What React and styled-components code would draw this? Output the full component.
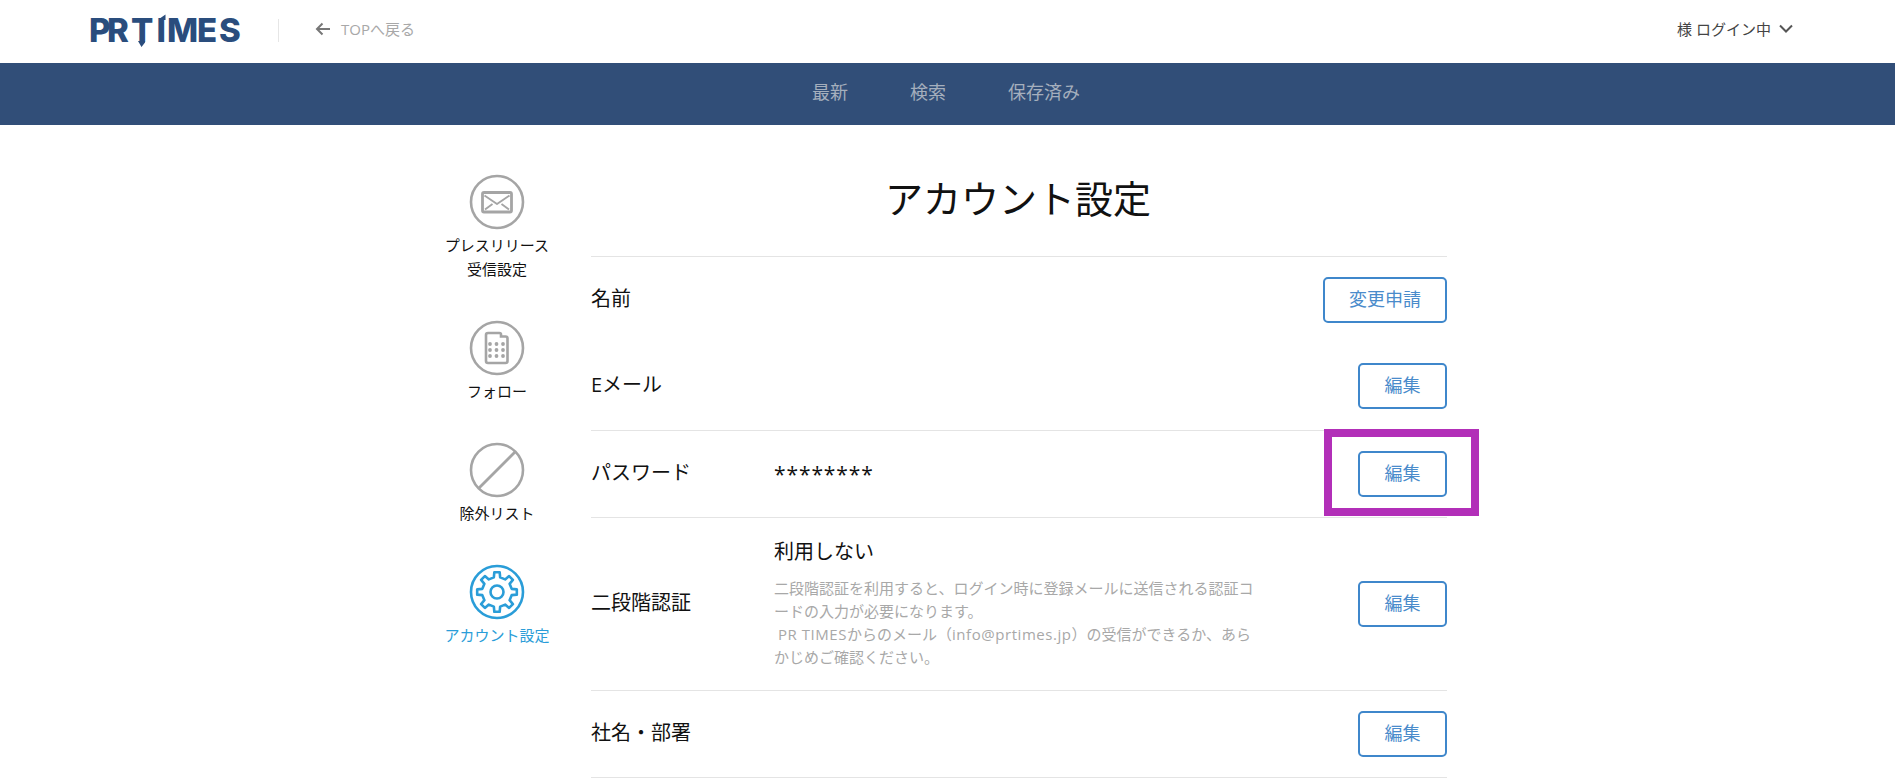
import React from "react";
import styled, { createGlobalStyle } from "styled-components";

const JP = `"Open Sans", "Noto Sans CJK JP", sans-serif`;

function gearPath(cx, cy, teeth, outer, inner) {
  const step = (Math.PI * 2) / teeth;
  const pts = [];
  for (let i = 0; i < teeth; i++) {
    const a = i * step - Math.PI / 2;
    const w = step * 0.17;
    const g = step * 0.27;
    [
      [a - g, inner],
      [a - w, outer],
      [a + w, outer],
      [a + g, inner],
    ].forEach(([t, r]) => pts.push([cx + Math.cos(t) * r, cy + Math.sin(t) * r]));
  }
  return "M" + pts.map((p) => p[0].toFixed(2) + " " + p[1].toFixed(2)).join("L") + "Z";
}

const items = [
  { key: "mail", label: ["プレスリリース", "受信設定"] },
  { key: "follow", label: ["フォロー"] },
  { key: "ban", label: ["除外リスト"] },
  { key: "gear", label: ["アカウント設定"], active: true },
];

function SideIcon({ type }) {
  return (
    <svg width="56" height="56" viewBox="0 0 56 56" fill="none" stroke="currentColor">
      <circle cx="28" cy="28" r="26" strokeWidth="2.6" />
      {type === "mail" && (
        <g strokeLinejoin="round">
          <rect x="13.5" y="18.5" width="29" height="19.5" rx="1.5" strokeWidth="2.8" />
          <path d="M15.5 21.5L28 30l12.5-8.5M16 35.5l7.5-5.5M40 35.5L32.5 30" strokeWidth="1.9" />
        </g>
      )}
      {type === "follow" && (
        <g>
          <path d="M19 13h11.5a1.5 1.5 0 0 1 1.5 1.5V16.5h4.5a2 2 0 0 1 2 2V41a2 2 0 0 1-2 2h-17.5a2 2 0 0 1-2-2V15a2 2 0 0 1 2-2z" strokeWidth="2.6" />
          {[24, 30, 36].map((y) =>
            [21, 27.5, 34].map((x) => (
              <circle key={x + "-" + y} cx={x} cy={y} r="1.9" fill="currentColor" stroke="none" />
            ))
          )}
        </g>
      )}
      {type === "ban" && <path d="M9.500 46.500L46.500 9.500" strokeWidth="2.8" />}
      {type === "gear" && (
        <g strokeWidth="2.6" strokeLinejoin="round">
          <path d={gearPath(28, 28, 8, 20, 15)} />
          <circle cx="28" cy="28" r="6.5" />
        </g>
      )}
    </svg>
  );
}

const rows = [
  { label: "名前", action: "変更申請", noLine: true },
  { label: "Eメール", action: "編集", tall: true },
  { label: "パスワード", action: "編集", secret: true, marked: true },
  { label: "二段階認証", action: "編集", twoStep: true },
  { label: "社名・部署", action: "編集" },
];

export default function App() {
  return (
    <>
      <GlobalStyle />
      <Header>
        <Logo href="#">
          <svg width="156" height="36" viewBox="0 0 156 36">
            <text y="30" x="0 18 42 67.5 78 108 130">
              PRTIMES
            </text>
            <path d="M70 7L76.500 2.500V8H70zM49 29h7v1.500L52.500 35z" />
          </svg>
        </Logo>
        <Divider />
        <BackLink href="#">
          <svg width="16" height="14" viewBox="0 0 16 14" fill="none" stroke="#777" strokeWidth="2">
            <path d="M15 7H2M7.5 1.5L2 7l5.5 5.5" />
          </svg>
          TOPへ戻る
        </BackLink>
        <UserMenu>
          様 ログイン中
          <svg width="14" height="9" viewBox="0 0 14 9" fill="none" stroke="#555" strokeWidth="2">
            <path d="M1 1.500l6 6 6-6" />
          </svg>
        </UserMenu>
      </Header>
      <Nav>
        <NavLink href="#">最新</NavLink>
        <NavLink href="#">検索</NavLink>
        <NavLink href="#">保存済み</NavLink>
      </Nav>
      <Content>
        <Sidebar>
          {items.map((item) => (
            <SideItem key={item.key} $active={item.active}>
              <SideIcon type={item.key} />
              <SideLabel>
                {item.label.map((line) => (
                  <div key={line}>{line}</div>
                ))}
              </SideLabel>
            </SideItem>
          ))}
        </Sidebar>
        <Main>
          <Title>アカウント設定</Title>
          {rows.map((row) => (
            <Row key={row.label} $noLine={row.noLine} $tall={row.tall}>
              <Label>{row.label}</Label>
              <Value>
                {row.secret && <Secret>********</Secret>}
                {row.twoStep && (
                  <>
                    <Status>利用しない</Status>
                    <Note>
                      二段階認証を利用すると、ログイン時に登録メールに送信される認証コ
                      <br />
                      ードの入力が必要になります。
                      <br />
                      &nbsp;<Latin>PR TIMES</Latin>からのメール（<Latin>info@prtimes.jp</Latin>）の受信ができるか、あら
                      <br />
                      かじめご確認ください。
                    </Note>
                  </>
                )}
              </Value>
              <ActionWrap>
                <ActionButton>{row.action}</ActionButton>
                {row.marked && <Highlight />}
              </ActionWrap>
            </Row>
          ))}
        </Main>
      </Content>
    </>
  );
}

const GlobalStyle = createGlobalStyle`
  html, body {
    margin: 0;
    padding: 0;
    background: #fff;
    font-family: ${JP};
    color: #111;
  }
  a {
    text-decoration: none;
  }
`;
const Header = styled.header`
  height: 63px;
  display: flex;
  align-items: center;
  padding: 0 102px 0 89px;
  box-sizing: border-box;
`;
const Logo = styled.a`
  display: block;
  width: 156px;
  height: 36px;
  margin-top: -3px;
  svg {
    overflow: visible;
  }
  text {
    font-family: "Inter", "Liberation Sans", sans-serif;
    font-size: 33px;
    font-weight: 800;
    fill: #2a4d7d;
  }
  path {
    fill: #2a4d7d;
  }
`;
const Divider = styled.span`
  width: 1px;
  height: 23px;
  background: #e6e6e6;
  margin: -2px 36px 0 33px;
`;
const BackLink = styled.a`
  display: flex;
  align-items: center;
  gap: 10px;
  font-size: 15px;
  color: #a8a8a8;
  margin-top: -6px;
`;
const UserMenu = styled.div`
  margin-left: auto;
  display: flex;
  align-items: center;
  gap: 8px;
  font-size: 15px;
  color: #444;
  margin-top: -6px;
`;
const Nav = styled.nav`
  height: 62px;
  padding: 0 3px 6px 0;
  box-sizing: border-box;
  background: #314e78;
  display: flex;
  align-items: center;
  justify-content: center;
  gap: 62px;
`;
const NavLink = styled.a`
  font-size: 18px;
  color: #a5afbd;
`;
const Content = styled.div`
  display: flex;
  margin-left: 430px;
  width: 1017px;
`;
const Sidebar = styled.aside`
  width: 134px;
  margin-right: 27px;
  padding-top: 49px;
  display: flex;
  flex-direction: column;
  gap: 39px;
`;
const SideItem = styled.a`
  display: flex;
  flex-direction: column;
  align-items: center;
  color: ${(p) => (p.$active ? "#2a9dd8" : "#a5a5a5")};
  div {
    color: ${(p) => (p.$active ? "#2a9dd8" : "#111")};
  }
`;
const SideLabel = styled.div`
  margin-top: 3px;
  font-size: 15px;
  line-height: 24px;
  text-align: center;
  white-space: nowrap;
`;
const Main = styled.main`
  flex: 1;
`;
const Title = styled.h1`
  margin: 0;
  height: 132px;
  box-sizing: border-box;
  padding: 45px 2px 0 0;
  font-size: 38px;
  line-height: 56px;
  font-weight: 400;
  text-align: center;
  border-bottom: 1px solid #e4e4e4;
  color: #111;
`;
const Row = styled.section`
  display: flex;
  align-items: center;
  padding: 20px 0 ${(p) => (p.$tall ? "21px" : "20px")};
  border-bottom: ${(p) => (p.$noLine ? "0" : "1px solid #e4e4e4")};
`;
const Label = styled.div`
  width: 183px;
  flex-shrink: 0;
  font-size: 20px;
  line-height: 30px;
  padding-bottom: 3px;
`;
const Value = styled.div`
  flex: 1;
`;
const Secret = styled.div`
  font-size: 21px;
  letter-spacing: 0.9px;
  line-height: 30px;
`;
const Status = styled.div`
  font-size: 20px;
  line-height: 30px;
  margin-top: -1px;
`;
const Note = styled.p`
  margin: 10px 0 1px;
  font-size: 15px;
  line-height: 23px;
  color: #a8a8a8;
  white-space: nowrap;
`;
const Latin = styled.span`
  letter-spacing: 0.55px;
`;
const ActionWrap = styled.div`
  position: relative;
  flex-shrink: 0;
`;
const ActionButton = styled.button`
  display: block;
  height: 46px;
  min-width: 89px;
  padding: 0 24px 5px;
  background: #fff;
  border: 2px solid #3f87cb;
  border-radius: 5px;
  font-family: ${JP};
  font-size: 18px;
  color: #4a8bcb;
`;
const Highlight = styled.span`
  position: absolute;
  left: -34px;
  right: -32px;
  top: -22px;
  bottom: -19px;
  border: 8px solid #b22fb8;
  pointer-events: none;
`;
